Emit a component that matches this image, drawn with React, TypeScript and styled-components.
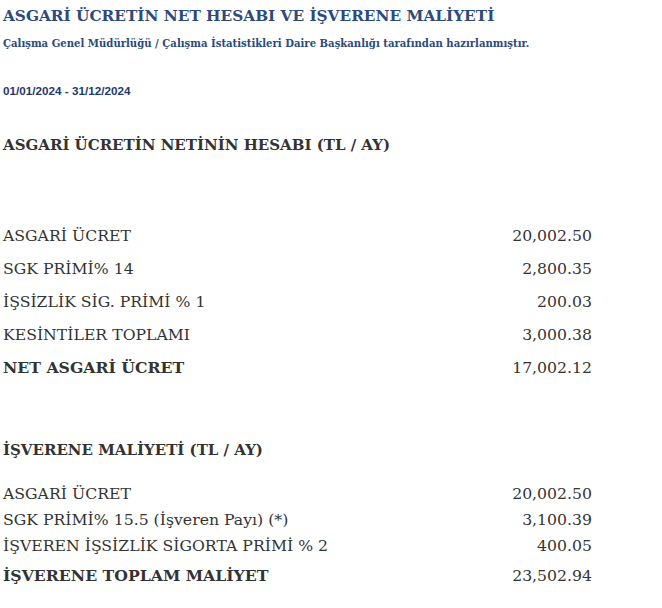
import React from 'react';
import styled, { createGlobalStyle } from 'styled-components';

const GlobalStyle = createGlobalStyle`
  body {
    margin: 0;
    background: #ffffff;
  }
`;

const Page = styled.div`
  width: 662px;
  padding: 5px 3px 0;
  box-sizing: border-box;
  font-family: 'DejaVu Serif', 'Liberation Serif', serif;
  color: #333333;
`;

const Title = styled.h1`
  margin: 0;
  font-size: 15.3px;
  font-weight: bold;
  line-height: 22px;
  color: #2c4a7c;
`;

const Subtitle = styled.p`
  margin: 10px 0 0;
  font-size: 10.1px;
  font-weight: bold;
  line-height: 14px;
  color: #2c4a7c;
`;

const DateRange = styled.p`
  margin: 33px 0 0;
  font-family: 'Liberation Sans', Arial, sans-serif;
  font-size: 11.7px;
  font-weight: bold;
  line-height: 14px;
  color: #1f3a6b;
`;

const SectionTitle = styled.h2<{ $top: number }>`
  margin: ${p => p.$top}px 0 0;
  font-size: 15px;
  font-weight: bold;
  line-height: 20px;
  color: #333333;
`;

const Table = styled.div<{ $top: number }>`
  width: 589px;
  margin-top: ${p => p.$top}px;
  display: flex;
  flex-direction: column;
`;

const Row = styled.div<{ $height: number; $bold?: boolean; $extra?: number }>`
  display: flex;
  justify-content: space-between;
  align-items: center;
  height: ${p => p.$height}px;
  margin-top: ${p => p.$extra || 0}px;
  font-size: 15.7px;
  font-weight: ${p => (p.$bold ? 'bold' : 300)};
  color: #333333;
`;

const Label = styled.span``;

const Value = styled.span`
  font-weight: 300;
  text-align: right;
`;

type Line = { label: string; value: string; bold?: boolean };

const netRows: Line[] = [
  { label: 'ASGARİ ÜCRET', value: '20,002.50' },
  { label: 'SGK PRİMİ% 14', value: '2,800.35' },
  { label: 'İŞSİZLİK SİG. PRİMİ % 1', value: '200.03' },
  { label: 'KESİNTİLER TOPLAMI', value: '3,000.38' },
  { label: 'NET ASGARİ ÜCRET', value: '17,002.12', bold: true },
];

const costRows: Line[] = [
  { label: 'ASGARİ ÜCRET', value: '20,002.50' },
  { label: 'SGK PRİMİ% 15.5 (İşveren Payı) (*)', value: '3,100.39' },
  { label: 'İŞVEREN İŞSİZLİK SİGORTA PRİMİ % 2', value: '400.05' },
  { label: 'İŞVERENE TOPLAM MALİYET', value: '23,502.94', bold: true },
];

export default function App() {
  return (
    <Page>
      <GlobalStyle />
      <Title>ASGARİ ÜCRETİN NET HESABI VE İŞVERENE MALİYETİ</Title>
      <Subtitle>Çalışma Genel Müdürlüğü / Çalışma İstatistikleri Daire Başkanlığı tarafından hazırlanmıştır.</Subtitle>
      <DateRange>01/01/2024 - 31/12/2024</DateRange>
      <SectionTitle $top={37}>ASGARİ ÜCRETİN NETİNİN HESABI (TL / AY)</SectionTitle>
      <Table $top={64}>
        {netRows.map(r => (
          <Row key={r.label} $height={33} $bold={r.bold}>
            <Label>{r.label}</Label>
            <Value>{r.value}</Value>
          </Row>
        ))}
      </Table>
      <SectionTitle $top={56}>İŞVERENE MALİYETİ (TL / AY)</SectionTitle>
      <Table $top={20}>
        {costRows.map(r => (
          <Row key={r.label} $height={26} $bold={r.bold} $extra={r.bold ? 4 : 0}>
            <Label>{r.label}</Label>
            <Value>{r.value}</Value>
          </Row>
        ))}
      </Table>
    </Page>
  );
}
